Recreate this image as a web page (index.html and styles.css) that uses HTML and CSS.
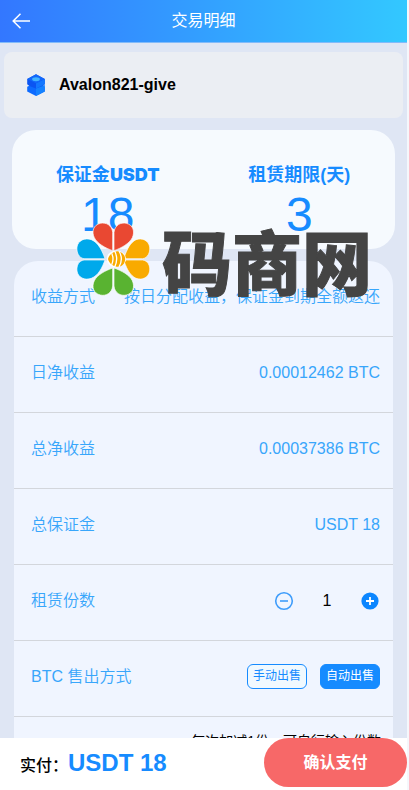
FILE: index.html
```html
<!DOCTYPE html>
<html lang="zh-CN">
<head>
    <meta charset="UTF-8">
    <meta name="viewport" content="width=device-width, initial-scale=1.0">
    <title>交易明细</title>
    <link rel="stylesheet" href="styles.css">
</head>
<body>
    <div class="page">
        <header class="header">
            <a href="#" class="back" aria-label="返回">
                <svg width="18" height="16" viewBox="0 0 18 16" fill="none" stroke="#fff" stroke-width="1.5">
                    <path d="M8.500 .8L1.200 8l7.300 7.200M1.200 8H18"/>
                </svg>
            </a>
            <h1 class="title">交易明细</h1>
        </header>

        <main class="content">
            <section class="device">
                <svg width="20" height="22" viewBox="0 0 18 20">
                    <path d="M9 8l8 3.500v4.500L9 20l-8-4v-4.500z" fill="#0d6bff"/>
                    <path d="M9 12l8-2v6l-8 4z" fill="#1482ff"/>
                    <path d="M1 4.500L9 .3l8 4.200v4.800l-2 1.500-6 2.400-6-2.400-2-1.500z" fill="#0b55f2"/>
                    <path d="M9 8.500l8-4v4.800L9 13.200z" fill="#1478ff"/>
                    <path d="M1 4.500L9 .3l8 4.200-8 4z" fill="#1268fa"/>
                    <ellipse cx="9" cy="4.800" rx="3.500" ry="1.800" fill="#43b4ff"/>
                </svg>
                <h2 class="device-name">Avalon821-give</h2>
            </section>

            <section class="stats">
                <div class="stat">
                    <span class="stat-label">保证金<b class="stat-unit">USDT</b></span>
                    <span class="stat-value">18</span>
                </div>
                <div class="stat">
                    <span class="stat-label">租赁期限(天)</span>
                    <span class="stat-value">3</span>
                </div>
            </section>

            <section class="list">
                <div class="row">
                    <span>收益方式</span>
                    <span>按日分配收益，保证金到期全额返还</span>
                </div>
                <div class="row">
                    <span>日净收益</span>
                    <span>0.00012462 BTC</span>
                </div>
                <div class="row">
                    <span>总净收益</span>
                    <span>0.00037386 BTC</span>
                </div>
                <div class="row">
                    <span>总保证金</span>
                    <span>USDT 18</span>
                </div>
                <div class="row">
                    <label for="count">租赁份数</label>
                    <div class="stepper">
                        <button type="button" class="step" aria-label="减少">
                            <svg width="20" height="20" viewBox="0 0 20 20" fill="none" stroke="#3f9dfb" stroke-width="1.6">
                                <circle cx="10" cy="10" r="8.300"/>
                                <path d="M6 10h8"/>
                            </svg>
                        </button>
                        <input type="text" id="count" class="count" value="1" inputmode="numeric">
                        <button type="button" class="step" aria-label="增加">
                            <svg width="20" height="20" viewBox="0 0 20 20">
                                <circle cx="10" cy="10" r="8.600" fill="#0c86ff"/>
                                <path d="M6 10h8M10 6v8" stroke="#fff" stroke-width="1.800"/>
                            </svg>
                        </button>
                    </div>
                </div>
                <div class="row">
                    <span>BTC 售出方式</span>
                    <div class="modes">
                        <button type="button" class="mode">手动出售</button>
                        <button type="button" class="mode active">自动出售</button>
                    </div>
                </div>
                <p class="hint">每次加减1份，可自行输入份数</p>
            </section>
        </main>

        <footer class="footer">
            <p class="total">实付：<strong class="amount">USDT 18</strong></p>
            <button type="button" class="pay">确认支付</button>
        </footer>

        <div class="watermark">
            <svg width="90" height="90" viewBox="0 0 270 270">
                <g fill="#e94832" stroke="#fff" stroke-width="2">
                    <path d="M128 107V52C126 31 108 21 91 25C70 30 64 50 73 68C82 86 106 99 128 107z"/>
                    <path d="M132 107V52C134 31 152 21 169 25C190 30 195 50 187 68C178 86 154 99 132 107z"/>
                </g>
                <g fill="#00a9eb" stroke="#fff" stroke-width="2">
                    <path d="M105 131H42C27 129 19 113 21 96C24 76 45 67 64 74C86 83 97 109 105 131z"/>
                    <path d="M105 135H42C27 137 19 151 21 168C24 188 45 197 64 190C86 181 97 157 105 135z"/>
                </g>
                <g fill="#f9aa00" stroke="#fff" stroke-width="2">
                    <path d="M163 125C171 103 181 82 198 74C217 67 236 77 239 96C241 113 233 129 218 131H167z"/>
                    <path d="M163 141C171 163 181 182 198 190C217 197 236 187 239 168C241 151 233 137 218 135H167z"/>
                </g>
                <g fill="#59b331" stroke="#fff" stroke-width="2">
                    <path d="M128 159V213C126 234 108 244 91 240C70 235 64 215 73 197C82 179 106 167 128 159z"/>
                    <path d="M132 159V213C134 234 152 244 169 240C190 235 195 215 187 197C178 179 154 167 132 159z"/>
                </g>
                <ellipse cx="139" cy="132" rx="29" ry="25" fill="#fff"/>
                <path d="M114 132C118 115 137 106 149 110C171 118 171 147 149 155C137 158 118 149 114 132z" fill="#f9aa00"/>
                <path d="M125 115Q133 132 125 149M134 108Q146 132 134 156M147 108Q161 132 147 156" fill="none" stroke="#fff" stroke-width="4"/>
            </svg>
            <span class="watermark-text">码商网</span>
        </div>
    </div>

    <script>
        const count = document.getElementById('count');
        const steps = document.querySelectorAll('.step');
        const modes = document.querySelectorAll('.mode');

        steps[0].addEventListener('click', () => {
            count.value = Math.max(1, Number(count.value) - 1);
        });
        steps[1].addEventListener('click', () => {
            count.value = Number(count.value) + 1;
        });

        modes.forEach(mode => {
            mode.addEventListener('click', () => {
                modes.forEach(m => m.classList.remove('active'));
                mode.classList.add('active');
            });
        });
    </script>
</body>
</html>
```
FILE: styles.css
```css
* {
    margin: 0;
    padding: 0;
    box-sizing: border-box;
}

body {
    font-family: "Liberation Sans", "Noto Sans CJK SC", sans-serif;
    font-size: 16px;
    line-height: 24px;
    color: #000;
    background: #f5f7fb;
    padding-right: 2px;
}

button, input {
    font: inherit;
    border: none;
    background: none;
}

.page {
    position: relative;
    display: flex;
    flex-direction: column;
    height: 100vh;
    background: #dfe6f4;
}

.header {
    display: grid;
    grid-template-columns: 36px 1fr 36px;
    align-items: center;
    height: 43px;
    flex-shrink: 0;
    border-bottom: 1px solid #82bbfa;
    background: linear-gradient(90deg, #3377ff, #33c8ff);
}

.back {
    display: flex;
    padding-left: 12px;
}

.title {
    font-size: 16px;
    font-weight: 400;
    color: #fff;
    text-align: center;
}

.content {
    flex: 1;
    min-height: 0;
    overflow-y: auto;
    scrollbar-width: none;
    padding-top: 9px;
}

.device {
    display: flex;
    align-items: center;
    gap: 13px;
    height: 66px;
    margin: 0 4px 12px;
    padding: 0 22px;
    border-radius: 8px;
    background: #ebeef3;
}

.device-name {
    font-size: 16px;
    font-weight: 700;
}

.stats {
    display: grid;
    grid-template-columns: 1fr 1fr;
    margin: 0 12px 12px;
    padding: 33px 0 6px;
    border-radius: 24px;
    background: #f6fafe;
}

.stat {
    display: flex;
    flex-direction: column;
    align-items: center;
    color: #168bff;
}

.stat-label {
    font-size: 18px;
    font-weight: 700;
}

.stat-unit {
    font-family: Inter, "Liberation Sans", sans-serif;
    font-weight: 900;
}

.stat-value {
    font-size: 48px;
    line-height: 56px;
}

.list {
    margin: 0 14px;
    border-radius: 24px;
    background: #f0f5ff;
}

.row {
    display: flex;
    justify-content: space-between;
    align-items: center;
    height: 76px;
    padding: 0 13px 4px 17px;
    border-bottom: 1px solid #d3d6dc;
    font-weight: 350;
    color: #38a6fb;
}

.stepper {
    display: flex;
    align-items: center;
    gap: 12px;
}

.step {
    display: flex;
    cursor: pointer;
}

.count {
    width: 42px;
    font-weight: 400;
    text-align: center;
    color: #000;
}

.modes {
    display: flex;
    gap: 13px;
}

.mode {
    padding: 0 5px;
    border: 1px solid #168bff;
    border-radius: 6px;
    background: #f0f9ff;
    font-size: 12px;
    line-height: 23px;
    font-weight: 400;
    color: #168bff;
    cursor: pointer;
}

.mode.active {
    background: #168bff;
    color: #fff;
}

.hint {
    padding: 12px;
    font-size: 14px;
    text-align: right;
}

.footer {
    display: flex;
    justify-content: space-between;
    align-items: flex-start;
    height: 52px;
    flex-shrink: 0;
    padding-left: 20px;
    background: #fff;
}

.total {
    line-height: 50px;
    font-weight: 500;
}

.amount {
    font-size: 24px;
    color: #168bff;
}

.pay {
    width: 37%;
    height: 49px;
    border-radius: 25px;
    background: #f76868;
    font-weight: 700;
    color: #fff;
    cursor: pointer;
}

/* site mark floating over the cards */
.watermark {
    position: absolute;
    top: 215px;
    left: 70px;
    display: flex;
    align-items: center;
    gap: 2px;
    pointer-events: none;
}

.watermark-text {
    font-family: "Noto Sans CJK SC", sans-serif;
    font-size: 70px;
    font-weight: 900;
    line-height: 90px;
    color: #444;
    -webkit-text-stroke: 1px #444;
}
```
